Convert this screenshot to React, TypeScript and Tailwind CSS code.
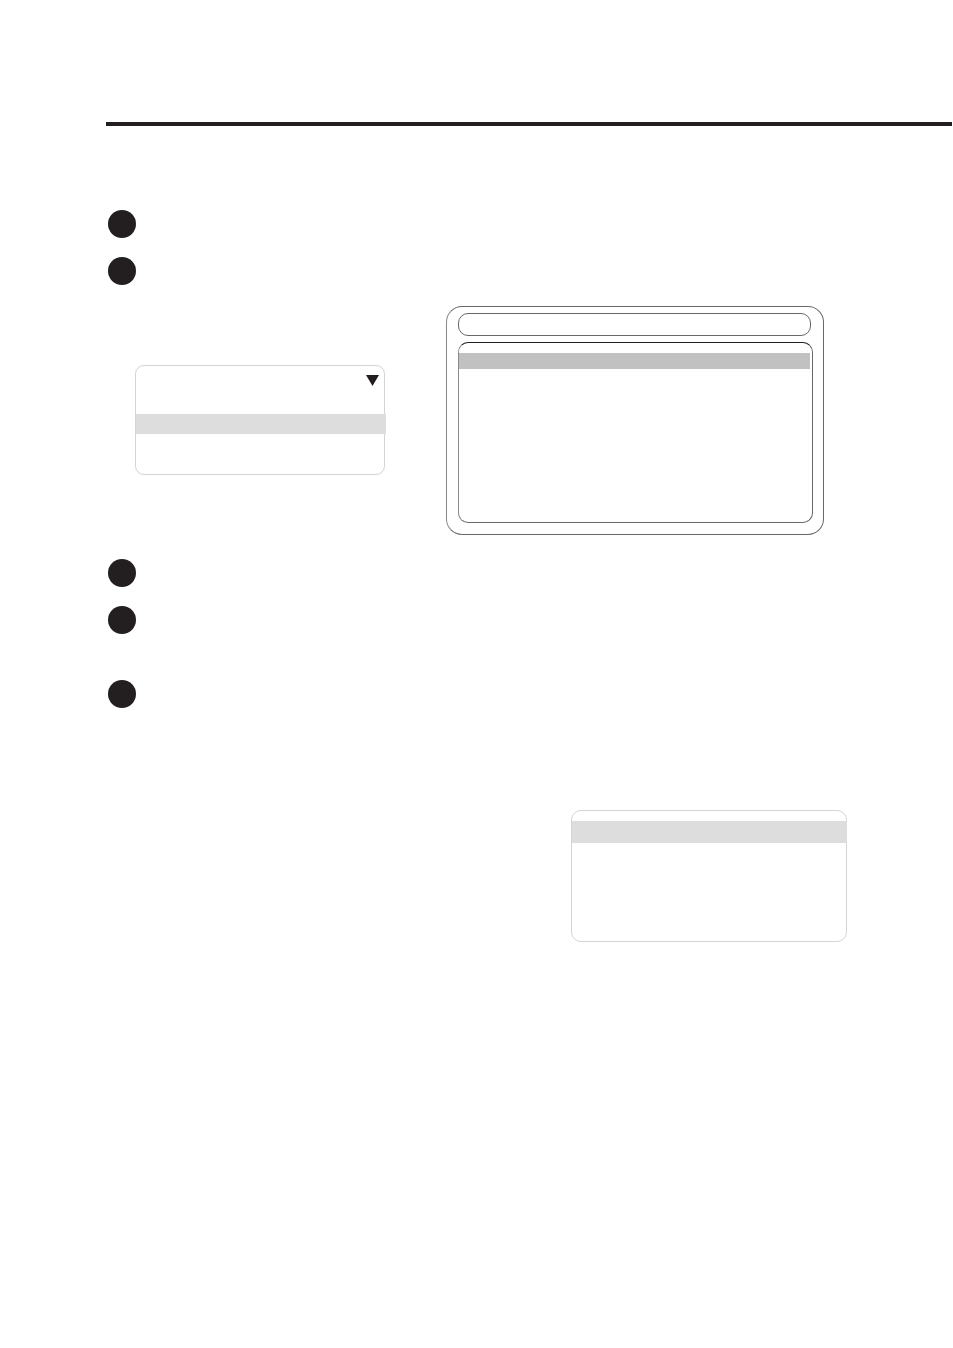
import { clsx } from "clsx";

function StepMarker() {
  return <span className="block size-7 rounded-full bg-[#231f20]" />;
}

/** Small remote display: light outline with one selected row. */
function HandsetDisplay() {
  return (
    <div className="mt-[59px] ml-[27px] flex h-[110px] w-[250px] shrink-0 flex-col rounded-[9px] border border-[#d4d4d4]">
      <div className="flex h-12 justify-end pt-[9px] pr-[5px]">
        <svg width="13" height="11" viewBox="0 0 13 11" aria-hidden="true">
          <path d="M0 0H13L6.5 11Z" fill="#231f20" />
        </svg>
      </div>
      <div className="-mr-0.5 h-5 bg-[#dddddd]" />
    </div>
  );
}

/** TV screen: title bar above a list whose first row is selected. */
function ScreenDisplay() {
  return (
    <div className="flex h-[229px] w-[378px] flex-col gap-1.5 rounded-2xl border border-[#68686a] border-l-[#8a8a8c] pt-1.5 pr-2.5 pl-[11px]">
      <div className="mr-0.5 h-[23px] shrink-0 rounded-[10px] border border-[#68686a]" />
      <div className="h-[181px] shrink-0 rounded-[10px] border border-[#68686a] border-t-[#231f20] border-l-[#8a8a8c] pt-2.5">
        <div className="mr-0.5 h-4 bg-[#c1c1c1]" />
      </div>
    </div>
  );
}

function MenuDisplay() {
  return (
    <div className="h-[132px] w-[276px] rounded-[10px] border border-[#d4d4d4] pt-2.5">
      <div className="-mr-px h-[22px] bg-[#dddddd]" />
    </div>
  );
}

type StepsProps = {
  start: number;
  gaps: ("first" | "normal" | "wide")[];
};

function Steps({ start, gaps }: StepsProps) {
  return (
    <ol start={start}>
      {gaps.map((gap, index) => (
        <li
          key={index}
          className={clsx(
            gap === "normal" && "mt-[19px]",
            gap === "wide" && "mt-[46px]",
          )}
        >
          <StepMarker />
        </li>
      ))}
    </ol>
  );
}

export default function App() {
  return (
    <div className="min-h-screen bg-white pt-[122px] font-['Liberation_Sans',sans-serif]">
      <hr className="mr-px ml-[106px] border-t-4 border-[#231f20]" />
      <main className="px-[106px] pt-[84px]">
        <div className="pl-0.5">
          <Steps start={1} gaps={["first", "normal"]} />
          <div className="mt-[21px] mb-6 flex items-start gap-[61px]">
            <HandsetDisplay />
            <ScreenDisplay />
          </div>
          <Steps start={3} gaps={["first", "normal", "wide"]} />
        </div>
        <div className="mt-[102px] flex justify-end">
          <MenuDisplay />
        </div>
      </main>
    </div>
  );
}
